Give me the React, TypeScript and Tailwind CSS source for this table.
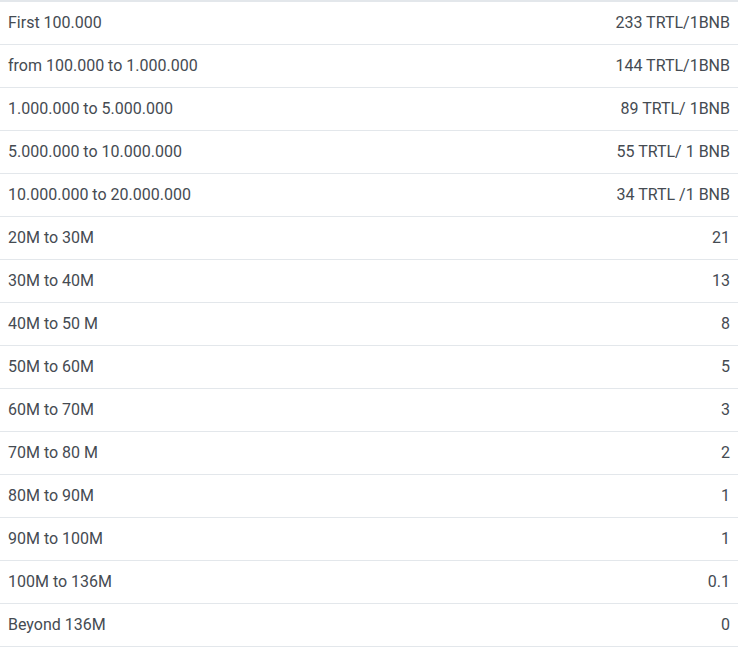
const rows: [string, string][] = [
  ["First 100.000", "233 TRTL/1BNB"],
  ["from 100.000 to 1.000.000", "144 TRTL/1BNB"],
  ["1.000.000 to 5.000.000", "89 TRTL/ 1BNB"],
  ["5.000.000 to 10.000.000", "55 TRTL/ 1 BNB"],
  ["10.000.000 to 20.000.000", "34 TRTL /1 BNB"],
  ["20M to 30M", "21"],
  ["30M to 40M", "13"],
  ["40M to 50 M", "8"],
  ["50M to 60M", "5"],
  ["60M to 70M", "3"],
  ["70M to 80 M", "2"],
  ["80M to 90M", "1"],
  ["90M to 100M", "1"],
  ["100M to 136M", "0.1"],
  ["Beyond 136M", "0"],
];

const App = () => {
  return (
    <div className="w-[738px] bg-white font-['Roboto',sans-serif] text-[16px] text-[#454b52]">
      <div className="border-t-2 border-[#e3e7eb]">
        {rows.map(([range, rate]) => (
          <div
            key={range}
            className="flex h-[43px] items-center justify-between border-b border-[#e3e7eb] px-2"
          >
            <span>{range}</span>
            <span>{rate}</span>
          </div>
        ))}
      </div>
    </div>
  );
};

export default App;
